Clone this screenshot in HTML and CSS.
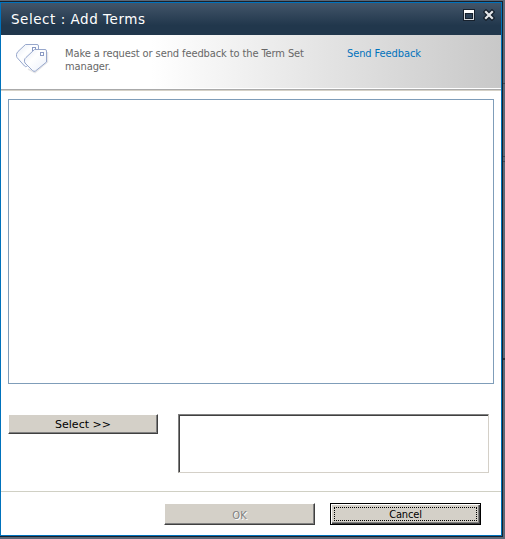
FILE: index.html
```
<!DOCTYPE html>
<html lang="en">
<head>
<meta charset="utf-8">
<title>Select : Add Terms</title>
<link rel="stylesheet" href="styles.css">
</head>
<body>
<div class="backdrop">
  <main class="dialog">
    <header class="titlebar">
      <h1>Select : Add Terms</h1>
      <div class="controls">
        <svg width="12" height="12" viewBox="0 0 12 12" shape-rendering="crispEdges">
          <rect width="12" height="12" fill="#17212d"/>
          <rect x="1" y="1" width="10" height="10" fill="#d5d9de"/>
          <rect x="1" y="1" width="10" height="3" fill="#fff"/>
          <rect x="2" y="4" width="8" height="6" fill="#17212d"/>
          <rect x="3" y="5" width="6" height="4" fill="#2c4157"/>
        </svg>
        <svg width="12" height="12" viewBox="0 0 12 12">
          <path d="M3 3 9 9M9 3 3 9" stroke="#17212d" stroke-width="4.600" stroke-linecap="square"/>
          <path d="M3 3 9 9M9 3 3 9" stroke="#e4e6e9" stroke-width="2.200" stroke-linecap="square"/>
        </svg>
      </div>
    </header>
    <section class="feedback">
      <svg class="tags" width="34" height="31" viewBox="0 0 34 31">
        <defs>
          <linearGradient id="tag" x1="0" y1="0" x2="1" y2="1">
            <stop offset="0" stop-color="#e4eaf5"/>
            <stop offset=".4" stop-color="#fff"/>
            <stop offset="1" stop-color="#eaf0fa"/>
          </linearGradient>
        </defs>
        <path d="M13 26 20 29.500 32.500 19V9" fill="none" stroke="#e6e6e8" stroke-width="1.500"/>
        <path d="M10.500 1.500H22Q23.500 1.500 23.500 3V13L11.500 23.500Q10.500 24 9.500 23L2 14.500Q1.300 13.500 1.500 11.500Q1.700 10 3 8.500Z" fill="url(#tag)" stroke="#97a7cc"/>
        <rect x="17.500" y="4.500" width="3" height="3" fill="#fff" stroke="#8a9ac4"/>
        <path d="M19.500 6.500H30Q31.500 6.500 31.500 8V19L20.500 28Q19 29 17.500 27.500L10 20Q9.300 19 9.500 17Q9.700 15.500 11 14.500Z" fill="url(#tag)" stroke="#97a7cc"/>
        <rect x="25.500" y="9.500" width="3" height="3" fill="#fff" stroke="#8a9ac4"/>
      </svg>
      <p>Make a request or send feedback to the Term Set<br>manager.</p>
      <a class="send">Send Feedback</a>
    </section>
    <div class="tree"></div>
    <div class="picker">
      <button class="btn select">Select &gt;&gt;</button>
      <div class="chosen"></div>
    </div>
    <footer class="actions">
      <button class="btn ok" disabled><span>OK</span></button>
      <button class="btn cancel"><span class="focus"><span class="label">Cancel</span></span></button>
    </footer>
  </main>
  <div class="page-edge"><i></i><i></i><i></i><i></i></div>
</div>
</body>
</html>
```
FILE: styles.css
```
* { box-sizing: border-box; }
body {
  margin: 0;
  font-family: "DejaVu Sans Condensed", "DejaVu Sans", sans-serif;
  font-size: 11px;
}
.backdrop {
  display: flex;
  width: 505px;
  height: 539px;
  padding: 1px 0 2px;
  background: #5b6776;
  overflow: hidden;
}
.dialog {
  display: flex;
  flex-direction: column;
  width: 503px;
  height: 536px;
  border: 1px solid #17212d;
  border-left: 0;
  background: #fff;
  box-shadow: inset 0 0 0 1px #0072bc;
  padding: 1px;
}
.titlebar {
  display: flex;
  justify-content: space-between;
  height: 32px;
  flex: none;
  padding: 0 6px 0 10px;
  background: linear-gradient(#435569, #21374c 70%, #21374c);
}
h1 {
  margin: 0;
  padding-top: 1px;
  font: 13.5px/31px "DejaVu Sans", sans-serif;
  color: #fff;
  letter-spacing: .53px;
}
.controls { display: flex; gap: 8px; padding-top: 6px; }
.feedback {
  display: flex;
  height: 56px;
  flex: none;
  padding-top: 8px;
  background: linear-gradient(90deg, #fff 30%, #c8c8c8) 0 0 / 100% 53px no-repeat;
  border-bottom: 1px solid #d5d1c7;
  box-shadow: inset 0 -1px #aaa;
  color: #676767;
}
.tags { margin-left: 14px; flex: none; }
.feedback p {
  width: 282px;
  margin: 4px 0 0 16px;
  line-height: 13px;
  white-space: nowrap;
  letter-spacing: -.1px;
}
.send { margin-top: 4px; line-height: 13px; color: #0072bc; letter-spacing: -.1px; }
.tree {
  width: 486px;
  height: 285px;
  flex: none;
  margin: 8px 0 0 7px;
  border: 1px solid #7f9db9;
}
.picker { display: flex; gap: 20px; margin: 30px 0 0 7px; }
.btn {
  display: flex;
  align-items: center;
  justify-content: center;
  padding: 0;
  color: #000;
  background: #d4d0c8;
  border: 1px solid;
  border-color: #fff #404040 #404040 #fff;
  box-shadow: inset -1px -1px #808080;
  font: inherit;
}
.select { width: 150px; height: 20px; font: 11px "DejaVu Sans", sans-serif; }
.chosen {
  width: 311px;
  height: 59px;
  border: 1px solid;
  border-color: #808080 #d4d0c8 #d4d0c8 #808080;
  box-shadow: inset 1px 1px #404040;
}
.actions {
  display: flex;
  gap: 15px;
  height: 44px;
  margin-top: 18px;
  padding: 11px 0 0 163px;
  border-top: 1px solid #d0d0c4;
}
.ok, .cancel { width: 151px; height: 22px; }
.ok { color: #808080; text-shadow: 1px 1px #fff; }
.ok span { padding-top: 2px; }
.cancel {
  border-color: #000;
  box-shadow: inset 1px 1px #fff, inset -1px -1px #404040, inset -2px -2px #808080;
}
.focus {
  width: 143px;
  height: 14px;
  border: 1px dotted #000;
  line-height: 14px;
}
.label { letter-spacing: -.15px; }
.page-edge {
  display: grid;
  align-content: start;
  width: 2px;
  height: 539px;
}
.page-edge i { height: 1px; margin-top: 82px; background: #3c4653; }
.page-edge i:nth-child(2) { margin-top: 72px; }
.page-edge i:nth-child(3) { margin-top: 4px; }
.page-edge i:nth-child(4) { height: 2px; margin-top: 196px; background: #28313d; }
```
